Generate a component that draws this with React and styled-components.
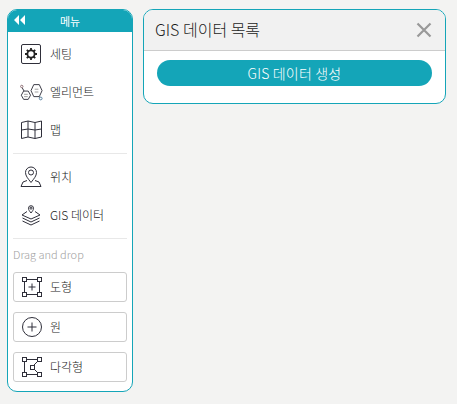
import React from 'react'
import styled, { createGlobalStyle } from 'styled-components'

const TEAL = '#14a5b8'
const INK = '#1c1c1c'

const GlobalStyle = createGlobalStyle`
  html, body { margin: 0; padding: 0; background: #f3f3f2; }
  body { font-family: "Noto Sans CJK KR", "Noto Sans", sans-serif; font-weight: 300; }
`

const Page = styled.div`
  display: flex;
  align-items: flex-start;
  gap: 10px;
  padding: 9px 0 0 7px;
  width: 457px;
  height: 404px;
  box-sizing: border-box;
  overflow: hidden;
`

const Sidebar = styled.aside`
  width: 126px;
  height: 383px;
  box-sizing: border-box;
  background: #fff;
  border: 1px solid ${TEAL};
  border-radius: 10px;
  overflow: hidden;
`

const SideHeader = styled.div`
  position: relative;
  height: 22px;
  background: ${TEAL};
  color: #fff;
  font-size: 11px;
  font-weight: 400;
  display: flex;
  align-items: center;
  justify-content: center;
`

const Collapse = styled.svg`
  position: absolute;
  left: 6px;
  top: 5px;
`

const SideBody = styled.div`
  padding: 3px 5px 0;
`

const Group = styled.div`
  display: flex;
  flex-direction: column;
  padding-bottom: 4px;
`

const MenuRow = styled.div`
  height: 38px;
  display: flex;
  align-items: center;
  gap: 7px;
  padding-left: 6px;
  font-size: 12px;
  color: ${INK};
`

const RowText = styled.span`
  margin-bottom: 2px;
`

const IconSlot = styled.span`
  width: 24px;
  height: 24px;
  display: flex;
  align-items: center;
  justify-content: center;
  flex: none;
`

const Divider = styled.hr`
  margin: 0 0 4px;
  border: 0;
  border-top: 1px solid #e8e8e8;
`

const DragLabel = styled.div`
  height: 24px;
  line-height: 22px;
  font-size: 11px;
  color: #a0a0a0;
`

const ShapeList = styled.div`
  display: flex;
  flex-direction: column;
  gap: 10px;
  margin-top: 5px;
`

const ShapeButton = styled.div`
  height: 30px;
  box-sizing: border-box;
  border: 1px solid #ccc;
  border-radius: 3px;
  display: flex;
  align-items: center;
  gap: 6px;
  padding-left: 6px;
  font-size: 12px;
  color: ${INK};
`

const Panel = styled.section`
  width: 303px;
  height: 95px;
  box-sizing: border-box;
  background: #fff;
  border: 1px solid ${TEAL};
  border-radius: 10px;
  overflow: hidden;
`

const PanelHeader = styled.div`
  height: 41px;
  box-sizing: border-box;
  background: #f1f1f1;
  border-bottom: 1px solid #ccc;
  display: flex;
  align-items: center;
  justify-content: space-between;
  padding: 0 13px 0 11px;
  font-size: 16px;
  color: ${INK};
`

const CreateButton = styled.div`
  margin: 9px 13px 0;
  height: 26px;
  border-radius: 13px;
  background: ${TEAL};
  color: #fff;
  font-size: 14px;
  letter-spacing: 0.2px;
  display: flex;
  align-items: center;
  justify-content: center;
`

const Line = { fill: 'none', stroke: '#2f2f3a', strokeWidth: 1 }
const Handle = ({ x, y }) => <rect x={x - 2} y={y - 2} width="4" height="4" fill="#fff" stroke="#2f2f3a" />

const GearIcon = () => (
  <svg width="20" height="20" viewBox="0 0 20 20">
    <rect x="0.5" y="0.5" width="19" height="19" rx="1.5" {...Line} />
    <circle cx="10" cy="10" r="3.6" fill="none" stroke="#222" strokeWidth="1.8" />
    <path d="M10 4v2.500M10 13.500v2.500M4 10h2.500M13.500 10h2.500M5.800 5.800l1.700 1.700M12.500 12.500l1.700 1.700M14.200 5.800l-1.700 1.700M7.500 12.500l-1.700 1.700" stroke="#222" strokeWidth="1.800" />
  </svg>
)

const ElementIcon = () => (
  <svg width="26" height="20" viewBox="0 0 26 20">
    <path d="M5 9h5l2.500 4.500L10 18H5l-2.500-4.500z" {...Line} />
    <path d="M16 2h6l3 6.500L22 15h-6l-3-6.500z" {...Line} />
    <path d="M3.500 5.500L5.500 9M21.500 15l1 1" {...Line} />
    <circle cx="3" cy="4" r="1.300" fill="none" stroke="#8a6a70" />
    <circle cx="23.500" cy="17" r="1.500" fill="none" stroke="#4d7a9a" />
    <path d="M5.500 12.500h4M5.500 15h4M17 7h4M17 10h4" stroke="#999" strokeWidth="1" />
  </svg>
)

const MapIcon = () => (
  <svg width="21" height="20" viewBox="0 0 21 20">
    <path d="M0.500 2.500L7 1l7 1.500L20.500 1v16L14 18.500 7 17l-6.500 1.500zM7 1v16M14 2.500v16M0.500 10L7 9l7 1 6.500-1" {...Line} />
  </svg>
)

const PinIcon = () => (
  <svg width="22" height="22" viewBox="0 0 22 22">
    <path d="M11 16.500C8 12.500 5.500 10 5.500 6.500a5.500 5.500 0 0 1 11 0c0 3.500-2.500 6-5.500 10z" {...Line} />
    <circle cx="11" cy="6.500" r="2.500" {...Line} />
    <path d="M7 14.500l-4 1.500-2 4.500h20l-2-4.500-4-1.500" {...Line} />
  </svg>
)

const LayersIcon = () => (
  <svg width="20" height="22" viewBox="0 0 20 22">
    <path d="M10 9C8.500 7 7.500 6 7.500 4.200a2.500 2.500 0 0 1 5 0C12.500 6 11.500 7 10 9z" {...Line} />
    <circle cx="10" cy="4.200" r="1" {...Line} />
    <path d="M6 7.500L1 11l9 4 9-4-5-3.500M1.500 14l8.500 4 8.500-4M1.500 17l8.500 4 8.500-4" {...Line} />
  </svg>
)

const BoxPlusIcon = () => (
  <svg width="20" height="20" viewBox="0 0 20 20">
    <rect x="2.500" y="2.500" width="15" height="15" {...Line} />
    <Handle x={2.5} y={2.5} /><Handle x={17.5} y={2.5} /><Handle x={2.5} y={17.5} /><Handle x={17.5} y={17.5} />
    <path d="M10 6.500v7M6.500 10h7" {...Line} />
  </svg>
)

const CirclePlusIcon = () => (
  <svg width="20" height="20" viewBox="0 0 20 20">
    <circle cx="10" cy="10" r="9.500" {...Line} />
    <path d="M10 5.500v9M5.500 10h9" {...Line} />
  </svg>
)

const PolygonIcon = () => (
  <svg width="20" height="20" viewBox="0 0 20 20">
    <path d="M2.500 2.500h15l-7.500 7.500 7.500 7.500h-15z" {...Line} />
    <Handle x={2.5} y={2.5} /><Handle x={17.5} y={2.5} /><Handle x={2.5} y={17.5} /><Handle x={17.5} y={17.5} /><Handle x={10.5} y={10.5} />
  </svg>
)

const App = () => (
  <Page>
    <GlobalStyle />
    <Sidebar>
      <SideHeader>
        <Collapse width="11" height="10" viewBox="0 0 11 10">
          <path d="M5 0v10L0 5zM11 0v10L6 5z" fill="#fff" />
        </Collapse>
        메뉴
      </SideHeader>
      <SideBody>
        <Group>
          <MenuRow><IconSlot><GearIcon /></IconSlot><RowText>세팅</RowText></MenuRow>
          <MenuRow><IconSlot><ElementIcon /></IconSlot><RowText>엘리먼트</RowText></MenuRow>
          <MenuRow><IconSlot><MapIcon /></IconSlot><RowText>맵</RowText></MenuRow>
        </Group>
        <Divider />
        <Group>
          <MenuRow><IconSlot><PinIcon /></IconSlot><RowText>위치</RowText></MenuRow>
          <MenuRow><IconSlot><LayersIcon /></IconSlot><RowText>GIS 데이터</RowText></MenuRow>
        </Group>
        <Divider />
        <DragLabel>Drag and drop</DragLabel>
        <ShapeList>
          <ShapeButton><IconSlot><BoxPlusIcon /></IconSlot><RowText>도형</RowText></ShapeButton>
          <ShapeButton><IconSlot><CirclePlusIcon /></IconSlot><RowText>원</RowText></ShapeButton>
          <ShapeButton><IconSlot><PolygonIcon /></IconSlot><RowText>다각형</RowText></ShapeButton>
        </ShapeList>
      </SideBody>
    </Sidebar>
    <Panel>
      <PanelHeader>
        <RowText>GIS 데이터 목록</RowText>
        <svg width="16" height="16" viewBox="0 0 16 16">
          <path d="M1.500 1.500l13 13M14.500 1.500l-13 13" stroke="#999" strokeWidth="2.200" fill="none" />
        </svg>
      </PanelHeader>
      <CreateButton>GIS 데이터 생성</CreateButton>
    </Panel>
  </Page>
)

export default App
